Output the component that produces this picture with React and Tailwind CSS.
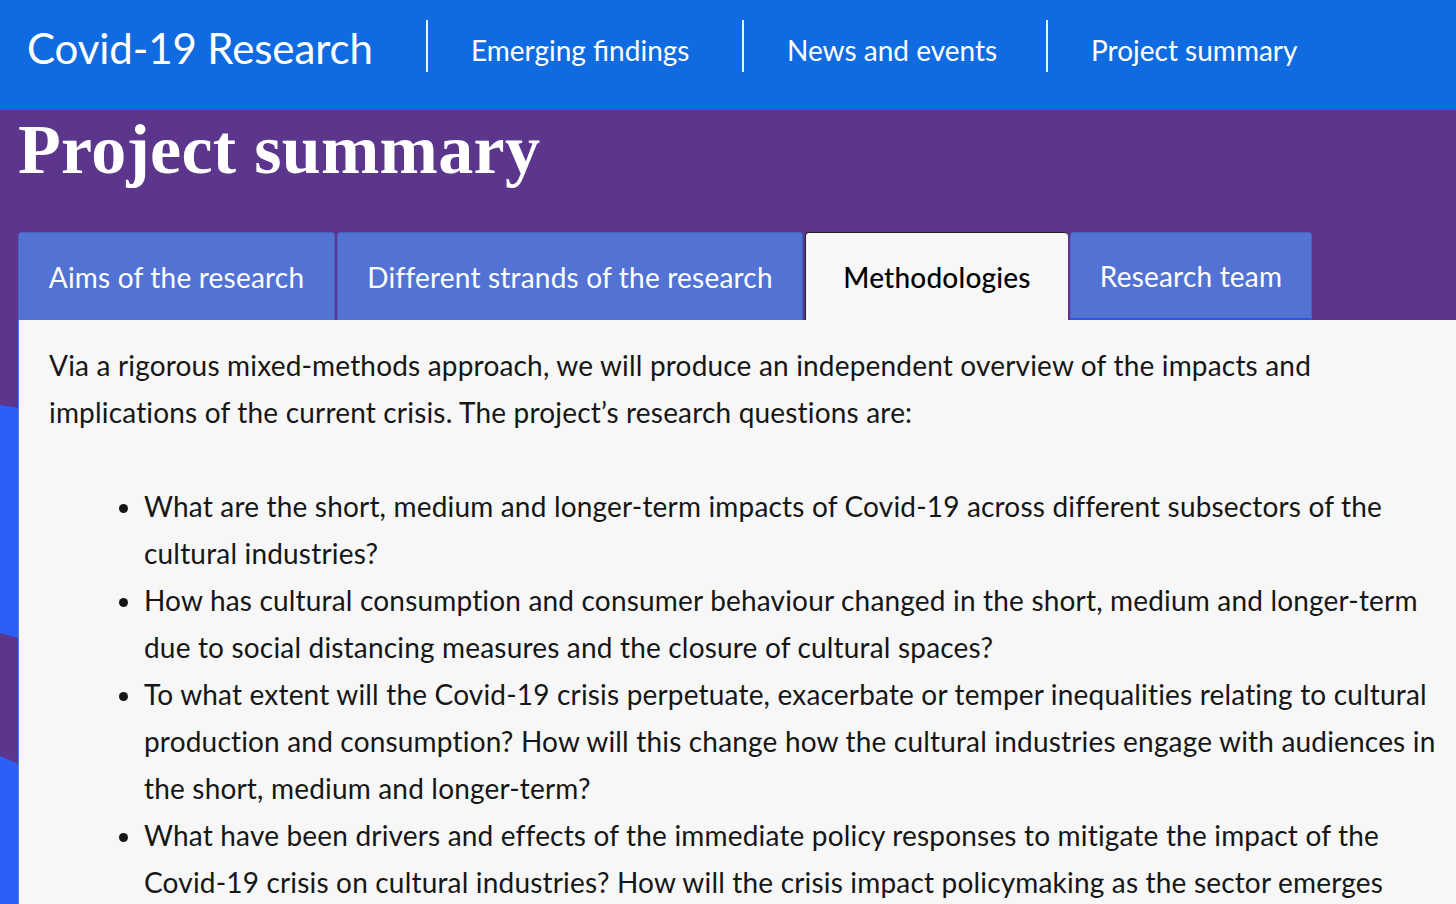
import React from "react";

const navItems = [
  { label: "Emerging findings", w: "w-[316px]" },
  { label: "News and events", w: "w-[304px]" },
  { label: "Project summary", w: "w-[300px]" },
];

const tabs = [
  { label: "Aims of the research", w: "w-[317px]" },
  { label: "Different strands of the research", w: "w-[466px]" },
  { label: "Methodologies", w: "w-[263px]", active: true },
  { label: "Research team", w: "w-[242px]", underline: true },
];

const questions = [
  "What are the short, medium and longer-term impacts of Covid-19 across different subsectors of the cultural industries?",
  "How has cultural consumption and consumer behaviour changed in the short, medium and longer-term due to social distancing measures and the closure of cultural spaces?",
  "To what extent will the Covid-19 crisis perpetuate, exacerbate or temper inequalities relating to cultural production and consumption? How will this change how the cultural industries engage with audiences in the short, medium and longer-term?",
  "What have been drivers and effects of the immediate policy responses to mitigate the impact of the Covid-19 crisis on cultural industries? How will the crisis impact policymaking as the sector emerges from lockdown?",
];

const sans = "font-['Lato','Open_Sans',sans-serif]";

const App = () => {
  return (
    <div className={`relative min-h-screen overflow-hidden bg-[#5c358c] ${sans}`}>
      {/* decorative stripes on the left edge */}
      <svg
        className="absolute top-0 left-0 w-[60px] h-[1000px]"
        viewBox="0 0 60 1000"
        preserveAspectRatio="none"
      >
        <polygon points="0,405 60,414 60,650 0,633" fill="#2b5ff6" />
        <polygon points="0,756 60,782 60,1000 0,1000" fill="#2b5ff6" />
      </svg>

      <header className="relative flex items-center h-[110px] bg-[#116be0] text-white">
        <div className="pl-[27px] w-[426px] text-[42px] leading-none -mt-[14px] tracking-[-0.1px]">
          Covid-19 Research
        </div>
        {navItems.map((item) => (
          <div
            key={item.label}
            className={`${item.w} h-[52px] -mt-[18px] border-l-2 border-white/90 pl-[43px] flex items-center text-[28px] pt-[8px]`}
          >
            {item.label}
          </div>
        ))}
      </header>

      <main className="relative">
        <h1 className="mt-[5px] ml-[18px] text-[70px] leading-none font-bold text-white font-['Liberation_Serif',serif] tracking-[0.3px]">
          Project summary
        </h1>

        <div className="flex gap-[2px] mt-[47px] ml-[18px]">
          {tabs.map((tab) => (
            <div
              key={tab.label}
              className={`${tab.w} h-[88px] flex items-center justify-center rounded-t-[4px] text-[28px] tracking-[0.2px] ${
                tab.active
                  ? "bg-[#f7f7f7] text-black font-medium border-t border-l border-[#222]"
                  : "bg-[#5273d4] text-white border border-[#4b62c8] border-b-0"
              } ${tab.underline ? "border-b-2 border-b-[#2a57e8]" : ""}`}
            >
              {tab.label}
            </div>
          ))}
        </div>

        <section className="ml-[18px] bg-[#f7f7f7] border-l border-[#4d7cf5] pl-[30px] pr-[10px] pt-[22px] pb-[40px] text-[28px] tracking-[0.18px] leading-[47px] text-[#161616]">
          <p className="mb-[47px]">
            Via a rigorous mixed-methods approach, we will produce an independent overview of the impacts and
            implications of the current crisis. The project’s research questions are:
          </p>
          <ul className="list-disc pl-[95px]">
            {questions.map((q) => (
              <li key={q}>{q}</li>
            ))}
          </ul>
        </section>
      </main>
    </div>
  );
};

export default App;
